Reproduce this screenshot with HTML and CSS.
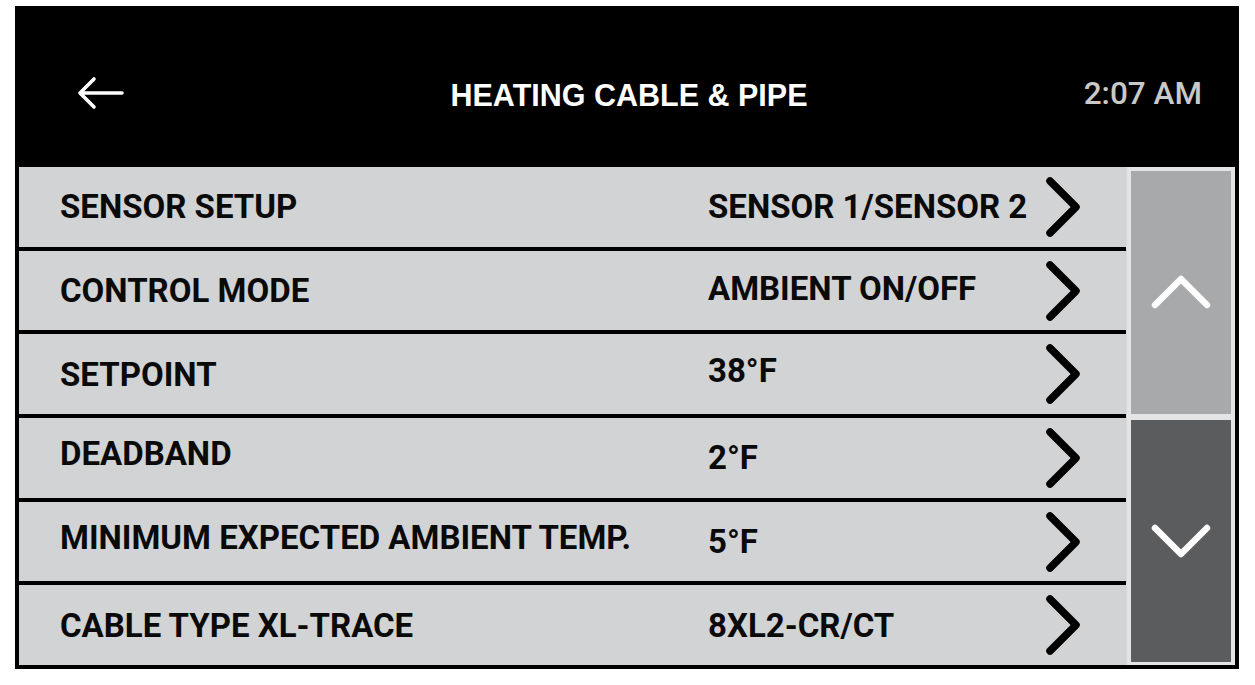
FILE: index.html
```html
<!DOCTYPE html>
<html lang="en">
<head>
<meta charset="utf-8">
<title>Heating Cable &amp; Pipe</title>
<link rel="stylesheet" href="styles.css">
</head>
<body>
<div class="frame">
  <header class="topbar">
    <div class="back">
      <svg width="48" height="34" viewBox="0 0 48 34" aria-hidden="true">
        <path d="M45 17 H3 M17 3 L3 17 L17 31" fill="none" stroke="#fff" stroke-width="3.6" stroke-linecap="round" stroke-linejoin="round"/>
      </svg>
    </div>
    <h1 class="title">HEATING CABLE &amp; PIPE</h1>
    <div class="time">2:07 AM</div>
  </header>
  <div class="content">
    <div class="list">
      <div class="row r1"><span class="label">SENSOR SETUP</span><span class="value">SENSOR 1/SENSOR 2</span><svg class="chev" viewBox="0 0 36 62"><polyline points="5,5 31,31 5,57"/></svg></div>
      <div class="row r2"><span class="label">CONTROL MODE</span><span class="value">AMBIENT ON/OFF</span><svg class="chev" viewBox="0 0 36 62"><polyline points="5,5 31,31 5,57"/></svg></div>
      <div class="row r3"><span class="label">SETPOINT</span><span class="value">38°F</span><svg class="chev" viewBox="0 0 36 62"><polyline points="5,5 31,31 5,57"/></svg></div>
      <div class="row r4"><span class="label">DEADBAND</span><span class="value">2°F</span><svg class="chev" viewBox="0 0 36 62"><polyline points="5,5 31,31 5,57"/></svg></div>
      <div class="row r5"><span class="label">MINIMUM EXPECTED AMBIENT TEMP.</span><span class="value">5°F</span><svg class="chev" viewBox="0 0 36 62"><polyline points="5,5 31,31 5,57"/></svg></div>
      <div class="row r6"><span class="label">CABLE TYPE XL-TRACE</span><span class="value">8XL2-CR/CT</span><svg class="chev" viewBox="0 0 36 62"><polyline points="5,5 31,31 5,57"/></svg></div>
    </div>
    <div class="scroll">
      <div class="btn up"><svg viewBox="0 0 62 36"><polyline points="5,31 31,5 57,31"/></svg></div>
      <div class="btn down"><svg viewBox="0 0 62 36"><polyline points="5,5 31,31 57,5"/></svg></div>
    </div>
  </div>
</div>
</body>
</html>
```

FILE: styles.css
```css
html, body {
  margin: 0;
  padding: 0;
  background: #ffffff;
}

.frame {
  margin: 6px 0 0 15px;
  width: 1224px;
  height: 663px;
  box-sizing: border-box;
  background: #000;
  padding: 0 4px 4px 4px;
  display: flex;
  flex-direction: column;
}

.topbar {
  height: 161px;
  flex: none;
  display: grid;
  grid-template-columns: 1fr auto 1fr;
  align-items: center;
  padding: 0 33px 0 33px;
}

.back {
  display: flex;
  align-items: center;
  padding-top: 12px;
  padding-left: 25px;
}

.back svg {
  display: block;
}

.title {
  margin: 0;
  font-family: "Liberation Sans", Arial, sans-serif;
  font-weight: 700;
  font-size: 30.5px;
  color: #ffffff;
  letter-spacing: 0;
  padding-top: 18px;
  padding-left: 4px;
}

.time {
  justify-self: end;
  font-family: Roboto, "Liberation Sans", sans-serif;
  font-weight: 500;
  font-size: 31.5px;
  color: #c9c9c9;
  padding-top: 14px;
}

.content {
  flex: 1;
  display: flex;
  min-height: 0;
}

.list {
  width: 1107px;
  display: flex;
  flex-direction: column;
  gap: 4px;
  background: #000;
}

.row {
  flex: 1;
  background: #d2d3d5;
  display: grid;
  grid-template-columns: 648px 1fr 36px;
  align-items: center;
  padding: 0 43px 0 41px;
  font-family: Roboto, "Liberation Sans", sans-serif;
  font-weight: 700;
  font-size: 33px;
  color: #0a0a0a;
}

.label, .value {
  white-space: nowrap;
  line-height: 1;
}

.r2 .value { position: relative; top: -2px; }
.r3 .value { position: relative; top: -4px; }
.r4 .label { position: relative; top: -4px; }
.r5 .label { position: relative; top: -4px; }

.chev {
  width: 36px;
  height: 62px;
  display: block;
  margin-left: -2px;
}

.chev polyline {
  fill: none;
  stroke: #000;
  stroke-width: 7.5;
  stroke-linecap: round;
  stroke-linejoin: round;
}

.scroll {
  width: 109px;
  background: #e4e4e4;
  box-sizing: border-box;
  padding: 4px 4px 3px 4px;
  display: flex;
  flex-direction: column;
  gap: 6px;
  border-left: 1px solid #d8d8d8;
}

.btn {
  flex: 1;
  display: flex;
  align-items: center;
  justify-content: center;
}

.btn.up {
  background: #a8a9ab;
}

.btn.down {
  background: #5b5c5e;
}

.btn svg {
  width: 62px;
  height: 36px;
  display: block;
}

.btn polyline {
  fill: none;
  stroke: #fff;
  stroke-width: 6.5;
  stroke-linecap: round;
  stroke-linejoin: round;
}
```
